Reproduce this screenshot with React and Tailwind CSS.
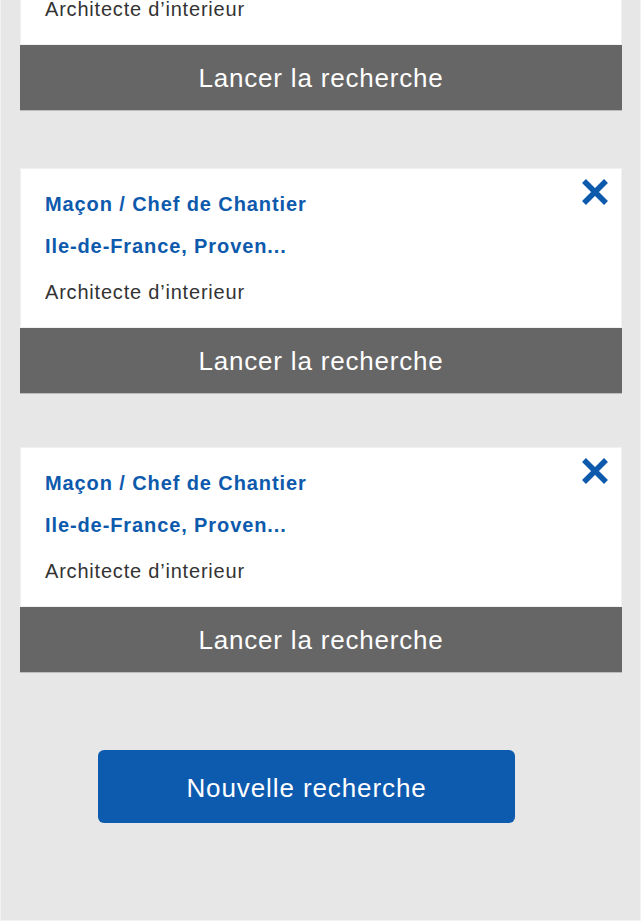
import React from 'react';

const searches = [
  { id: 1, job: 'Maçon / Chef de Chantier', place: 'Ile-de-France, Proven...', sector: 'Architecte d’interieur' },
  { id: 2, job: 'Maçon / Chef de Chantier', place: 'Ile-de-France, Proven...', sector: 'Architecte d’interieur' },
  { id: 3, job: 'Maçon / Chef de Chantier', place: 'Ile-de-France, Proven...', sector: 'Architecte d’interieur' },
];

function CloseIcon() {
  return (
    <svg width="28" height="28" viewBox="0 0 28 28" fill="none">
      <path d="M3 3 L25 25 M25 3 L3 25" stroke="#0d5aad" strokeWidth="5.5" strokeLinecap="butt" />
    </svg>
  );
}

function SearchCard({ item, className }) {
  return (
    <div className={className}>
      <div className="relative bg-white border border-[#f1f1f1] px-[24px] pt-[21px] pb-[21px]">
        <button className="absolute right-[12px] top-[9px]">
          <CloseIcon />
        </button>
        <p className="text-[20px] leading-[28px] tracking-[0.9px] font-bold text-[#0d5aad]">{item.job}</p>
        <p className="mt-[14px] text-[20px] leading-[28px] tracking-[0.9px] font-bold text-[#0d5aad]">{item.place}</p>
        <p className="mt-[18px] text-[20px] leading-[28px] tracking-[0.8px] text-[#333333]">{item.sector}</p>
      </div>
      <button className="w-full h-[65px] pt-[1px] bg-[#666666] text-white text-[26px] tracking-[0.8px] shadow-[0_1px_0_#bcbcbc]">
        Lancer la recherche
      </button>
    </div>
  );
}

export default function App() {
  return (
    <div
      className="h-[921px] overflow-hidden bg-[#e7e7e7] border-l border-r border-b border-[#f3f3f3]"
      style={{ fontFamily: '"Liberation Sans", Arial, sans-serif' }}
    >
      <div className="pl-[19px] pr-[18px]">
        <SearchCard item={searches[0]} className="mt-[-115px]" />
        <SearchCard item={searches[1]} className="mt-[58px]" />
        <SearchCard item={searches[2]} className="mt-[54px]" />
      </div>
      <button className="mt-[78px] ml-[97px] w-[417px] h-[73px] pt-[3px] rounded-[6px] bg-[#0d5baf] text-white text-[26px] tracking-[0.9px]">
        Nouvelle recherche
      </button>
    </div>
  );
}
